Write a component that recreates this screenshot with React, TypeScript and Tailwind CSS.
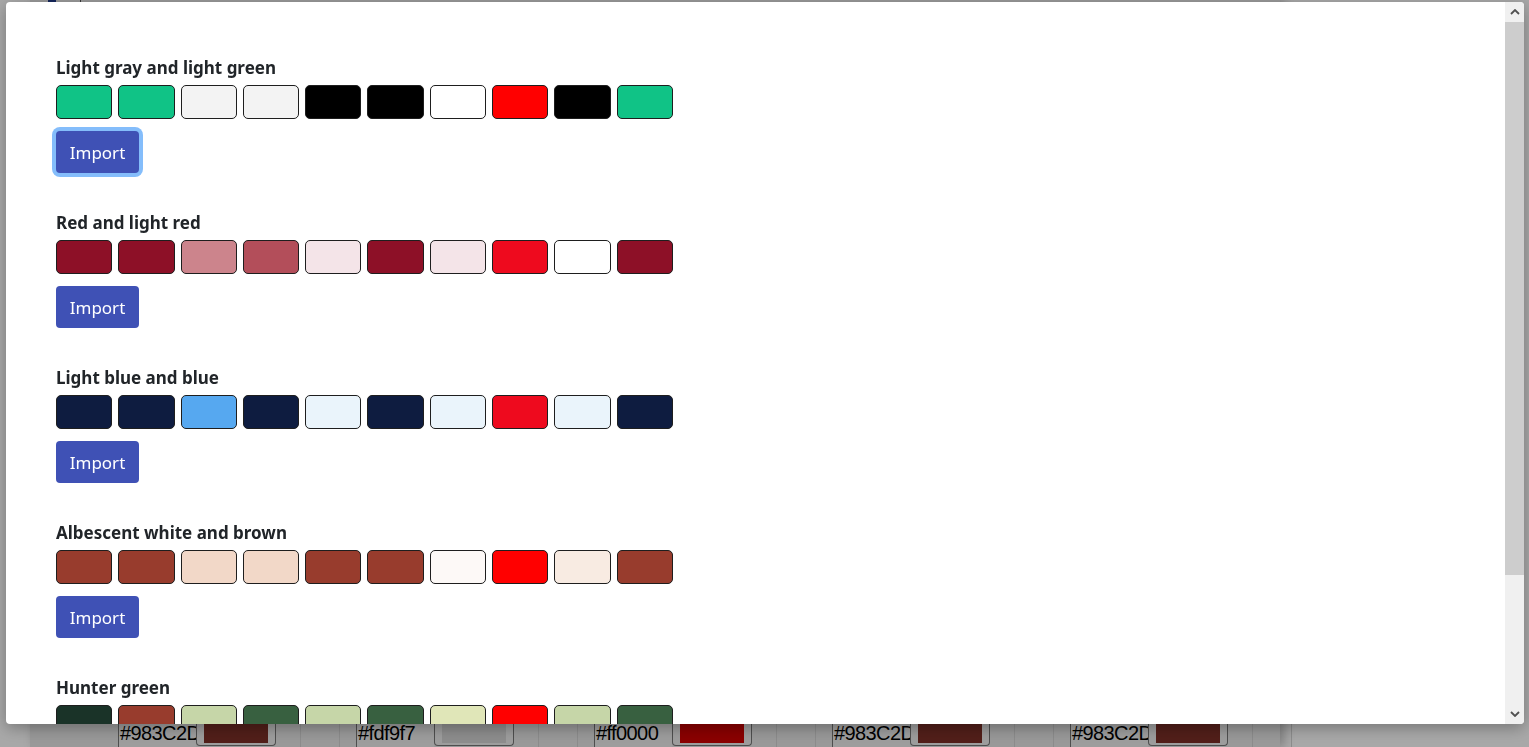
const palettes = [
  {
    name: "Light gray and light green",
    colors: [
      "bg-[#10c386]",
      "bg-[#10c386]",
      "bg-[#f3f3f3]",
      "bg-[#f3f3f3]",
      "bg-[#000000]",
      "bg-[#000000]",
      "bg-[#ffffff]",
      "bg-[#ff0000]",
      "bg-[#000000]",
      "bg-[#10c386]",
    ],
  },
  {
    name: "Red and light red",
    colors: [
      "bg-[#8d1027]",
      "bg-[#8d1027]",
      "bg-[#cc848c]",
      "bg-[#b34e5a]",
      "bg-[#f4e4e8]",
      "bg-[#8d1027]",
      "bg-[#f4e4e8]",
      "bg-[#ee0a1e]",
      "bg-[#ffffff]",
      "bg-[#8d1027]",
    ],
  },
  {
    name: "Light blue and blue",
    colors: [
      "bg-[#0e1c40]",
      "bg-[#0e1c40]",
      "bg-[#56a8f0]",
      "bg-[#0e1c40]",
      "bg-[#eaf4fb]",
      "bg-[#0e1c40]",
      "bg-[#eaf4fb]",
      "bg-[#ee0a1e]",
      "bg-[#eaf4fb]",
      "bg-[#0e1c40]",
    ],
  },
  {
    name: "Albescent white and brown",
    colors: [
      "bg-[#983c2d]",
      "bg-[#983c2d]",
      "bg-[#f2d8c8]",
      "bg-[#f2d8c8]",
      "bg-[#983c2d]",
      "bg-[#983c2d]",
      "bg-[#fdf9f7]",
      "bg-[#ff0000]",
      "bg-[#f8ebe2]",
      "bg-[#983c2d]",
    ],
  },
  {
    name: "Hunter green",
    colors: [
      "bg-[#1a3328]",
      "bg-[#983c2d]",
      "bg-[#c6d6a8]",
      "bg-[#386040]",
      "bg-[#c6d6a8]",
      "bg-[#386040]",
      "bg-[#e0e6b8]",
      "bg-[#ff0000]",
      "bg-[#c6d6a8]",
      "bg-[#386040]",
    ],
  },
];

const fields = [
  { hex: "#983C2D", swatch: "bg-[#7c2f27]" },
  { hex: "#fdf9f7", swatch: "bg-[#d6d6d6]" },
  { hex: "#ff0000", swatch: "bg-[#d20000]" },
  { hex: "#983C2D", swatch: "bg-[#7c2f27]" },
  { hex: "#983C2D", swatch: "bg-[#7c2f27]" },
];

function BackgroundPage() {
  return (
    <div className="flex h-screen flex-col bg-white">
      <div className="ml-[30px] flex w-[1250px] flex-1 flex-col bg-[#e8e8e8] shadow-[4px_0_10px_rgba(0,0,0,0.25)]">
        {/* Header strip (mostly hidden behind the modal) */}
        <div className="flex h-[3px] items-start gap-[24px] pl-[18px]">
          <div className="h-[3px] w-[8px] bg-[#1e3a8a]" />
          <div className="h-[3px] w-[1px] bg-[#555]" />
        </div>

        {/* Field row at the bottom */}
        <div className="mt-auto flex h-[25px] pl-[88px]">
          {fields.map((f, i) => (
            <div key={i} className="flex w-[238px]">
              <div className="h-full w-[78px] overflow-hidden whitespace-nowrap border-l border-[#777] bg-[#efefef] pl-[1px] font-['Liberation_Sans',Arial,sans-serif] text-[20px] leading-[22px] tracking-[-0.6px] text-black">
                {f.hex}
              </div>
              <div className="flex h-[24px] w-[80px] items-center justify-center rounded-b-[4px] border border-t-0 border-[#777] bg-[#efefef] px-[7px] pb-[2px]">
                <div className={`h-full w-full ${f.swatch}`} />
              </div>
              <div className="flex w-[80px]">
                <div className="ml-[24px] w-[40px] border-x border-[#d4d4d4]" />
              </div>
            </div>
          ))}
        </div>
      </div>
    </div>
  );
}

function Palette({ name, colors, focused }: { name: string; colors: string[]; focused?: boolean }) {
  return (
    <div className="mb-[40px]">
      <h3 className="text-[17px] font-bold leading-[20px] text-[#212529]">{name}</h3>
      <div className="mt-[7px] flex gap-[6px]">
        {colors.map((c, i) => (
          <div key={i} className={`h-[34px] w-[56.3px] rounded-[5px] border border-[#1e1e1e] ${c}`} />
        ))}
      </div>
      <button
        className={`mt-[12px] h-[42px] w-[83px] rounded-[4px] bg-[#3f51b5] pt-[2px] text-[17px] text-white ${
          focused ? "shadow-[0_0_0_4px_#84bdfb]" : ""
        }`}
      >
        Import
      </button>
    </div>
  );
}

function Scrollbar() {
  return (
    <div className="flex w-[19px] shrink-0 flex-col bg-[#f0f0f0]">
      <div className="flex h-[20px] items-center justify-center">
        <svg width="10" height="6" viewBox="0 0 10 6">
          <path d="M1 5 L5 1 L9 5" fill="none" stroke="#505050" strokeWidth="1.8" />
        </svg>
      </div>
      <div className="h-[553px] bg-[#cdcdcd]" />
      <div className="flex-1" />
      <div className="flex h-[20px] items-center justify-center">
        <svg width="10" height="6" viewBox="0 0 10 6">
          <path d="M1 1 L5 5 L9 1" fill="none" stroke="#505050" strokeWidth="1.8" />
        </svg>
      </div>
    </div>
  );
}

export default function App() {
  return (
    <div className="font-['Noto_Sans','Open_Sans',sans-serif]">
      <BackgroundPage />

      {/* Overlay */}
      <div className="fixed inset-0 bg-black/[0.34]" />

      {/* Modal */}
      <div className="fixed top-[2px] right-[5px] bottom-[23px] left-[6px] flex overflow-hidden rounded-[4px] bg-white shadow-[0_4px_16px_rgba(0,0,0,0.3)]">
        <div className="flex-1 overflow-hidden">
          <div className="px-[50px] pt-[56px] pb-[125px]">
            {palettes.map((p, i) => (
              <Palette key={p.name} name={p.name} colors={p.colors} focused={i === 0} />
            ))}
          </div>
        </div>
        <Scrollbar />
      </div>
    </div>
  );
}
